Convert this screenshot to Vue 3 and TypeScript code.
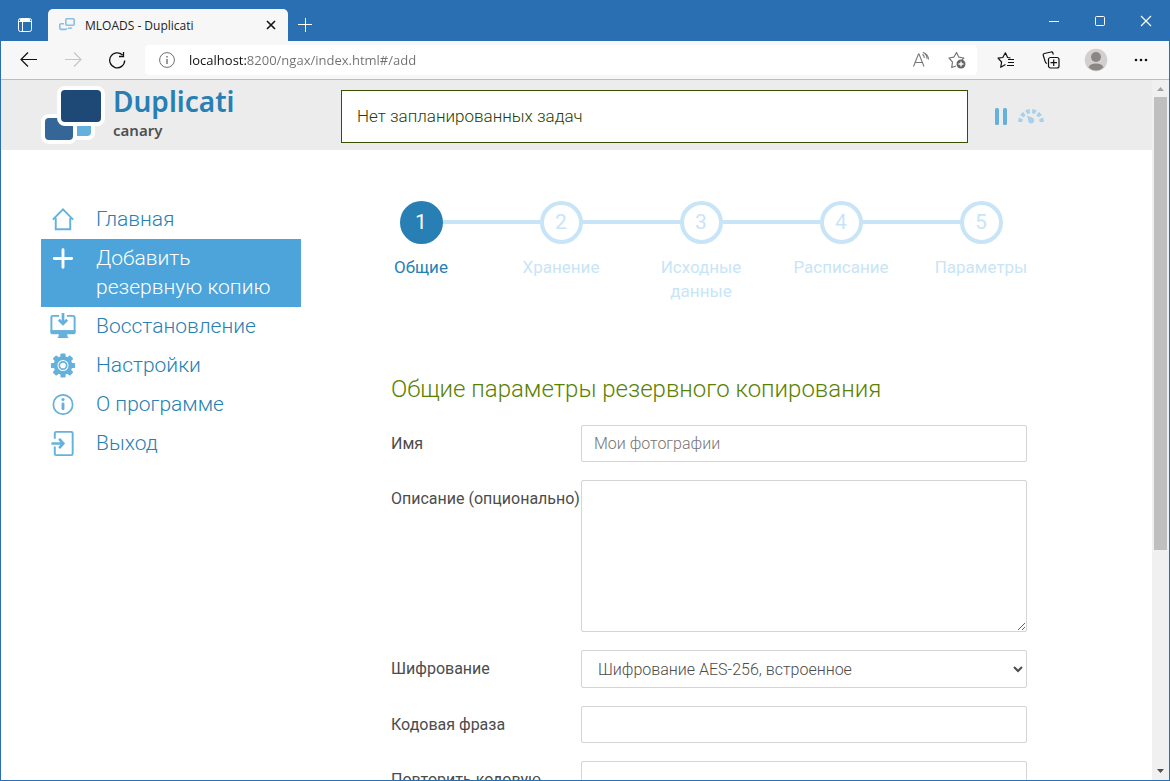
<script setup lang="ts">
import { ref } from 'vue'

interface NavItem {
  id: string
  label: string
  active?: boolean
}

const nav: NavItem[] = [
  { id: 'home', label: 'Главная' },
  { id: 'add', label: 'Добавить резервную копию', active: true },
  { id: 'restore', label: 'Восстановление' },
  { id: 'settings', label: 'Настройки' },
  { id: 'about', label: 'О программе' },
  { id: 'logout', label: 'Выход' },
]

const steps: string[] = ['Общие', 'Хранение', 'Исходные данные', 'Расписание', 'Параметры']
const teeth: number[] = [0, 45, 90, 135, 180, 225, 270, 315]
const gaugeMarks: number[] = [-80, -48, -16, 16, 48, 80]

const current = ref(0)
const address = ref('localhost:8200/ngax/index.html#/add')
const name = ref('')
const description = ref('')
const encryption = ref('aes')
const passphrase = ref('')
const repeat = ref('')
</script>

<template>
  <div class="window">
    <header class="titlebar">
      <button class="tab-menu" aria-label="Меню вкладок">
        <svg width="16" height="16" viewBox="0 0 16 16" fill="none" stroke="#fff">
          <rect x="1.5" y="1.5" width="13" height="13" rx="2" />
          <path d="M2 4.5h12M5.500 4v10" />
          <path d="M3 3h10" stroke-width="2" />
        </svg>
      </button>
      <div class="tab">
        <svg width="16" height="16" viewBox="0 0 16 16" fill="none" stroke="#86c1e2" stroke-width="1.6">
          <rect x="6.8" y="1.8" width="8.4" height="6.4" rx="1" />
          <path d="M5 6.800H2A1.200 1.200 0 0 0 .8 8v3.200A1.200 1.200 0 0 0 2 12.400h4.500A1.200 1.200 0 0 0 7.700 11.200M9 11.200h2.500a1 1 0 0 0 1-1" />
        </svg>
        <span class="tab-title">MLOADS - Duplicati</span>
        <button class="tab-close" aria-label="Закрыть вкладку">
          <svg width="10" height="10" viewBox="0 0 10 10" stroke="#111" stroke-width="1.6"><path d="M1 1l8 8M9 1L1 9" /></svg>
        </button>
      </div>
      <button class="new-tab" aria-label="Новая вкладка">
        <svg width="14" height="14" viewBox="0 0 14 14" stroke="#fff"><path d="M7.5 0v14M0 6.5h14" /></svg>
      </button>
      <div class="caption">
        <button aria-label="Свернуть">
          <svg width="12" height="12" viewBox="0 0 12 12" stroke="#fff"><path d="M1 6.5h10" /></svg>
        </button>
        <button aria-label="Развернуть">
          <svg width="12" height="12" viewBox="0 0 12 12" fill="none" stroke="#fff"><rect x="1.5" y="1.5" width="9" height="9" rx="1" /></svg>
        </button>
        <button aria-label="Закрыть">
          <svg width="12" height="12" viewBox="0 0 12 12" stroke="#fff" stroke-width="1.2"><path d="M1 1l10 10M11 1L1 11" /></svg>
        </button>
      </div>
    </header>

    <div class="toolbar">
      <div class="history">
        <button aria-label="Назад">
          <svg width="18" height="16" viewBox="0 0 18 16" fill="none" stroke="#111" stroke-width="1.200"><path d="M17 7.500H1.500M8 .5l-7 7 7 7" /></svg>
        </button>
        <button aria-label="Вперёд" disabled>
          <svg width="18" height="16" viewBox="0 0 18 16" fill="none" stroke="#c6c6c6" stroke-width="1.200"><path d="M1 7.500h15.500M10 .5l7 7-7 7" /></svg>
        </button>
        <button aria-label="Обновить">
          <svg width="18" height="18" viewBox="0 0 18 18" fill="none" stroke="#111" stroke-width="1.300"><path d="M16.700 9.500A7.500 7.500 0 1 1 14.500 4M15.500 1v4.500H11" /></svg>
        </button>
      </div>
      <div class="address">
        <svg width="16" height="16" viewBox="0 0 16 16" fill="none" stroke="#707070">
          <circle cx="8" cy="8" r="7.400" />
          <path d="M8 7v5M8 4v1.500" stroke-width="1.400" />
        </svg>
        <input v-model="address" class="address-input" type="text" aria-label="Адрес" />
        <button aria-label="Прочесть вслух">
          <svg width="18" height="16" viewBox="0 0 18 16" fill="none" stroke="#777" stroke-width="1.100">
            <path d="M1.500 14.500L6.500 2h.5l5 12.500M3.300 10.500h7M10.500 2.200c1.300 1 1.800 2.200 1.800 3.800M12.300.8c1.800 1.500 2.700 3.200 2.700 6M10.800.5c3.500 1 5.500 3.500 5.700 7" />
          </svg>
        </button>
        <button aria-label="Добавить в избранное">
          <svg width="18" height="18" viewBox="0 0 18 18" fill="none" stroke="#777" stroke-width="1.200" stroke-linejoin="round">
            <path d="M8 15l-4.300 1.500.8-5.300L1 7l4.800-.8L8.500 1.500l2.400 4.700 5 .8-2 1.800" />
            <circle cx="13" cy="13" r="4.500" fill="#666" stroke="none" />
            <path d="M13 10.500v5M10.500 13h5" stroke="#fff" stroke-width="1.300" />
          </svg>
        </button>
      </div>
      <div class="tools">
        <button aria-label="Избранное">
          <svg width="18" height="18" viewBox="0 0 18 18" fill="none" stroke="#111" stroke-width="1.200" stroke-linejoin="round">
            <path d="M8.500 13.500l-4.800 2.800.9-5.300L1 7.200l4.800-.7L8.400 1.800l2.200 4.700 2.800.3M11 8.500h6M11 11.500h6M10 14.500h7" />
          </svg>
        </button>
        <button aria-label="Коллекции">
          <svg width="18" height="18" viewBox="0 0 18 18" fill="none" stroke="#111" stroke-width="1.200">
            <path d="M5 12.500c-1-.3-1.500-.8-1.800-1.800L1.300 4.500c-.3-1 0-1.700 1-2L9 1c1-.2 1.600.1 1.900 1l.4 1.500" />
            <rect x="6.500" y="6.500" width="10.500" height="10.500" rx="2" />
            <path d="M11.700 8.500v6.500M8.500 11.700H15" />
          </svg>
        </button>
        <button class="profile" aria-label="Профиль">
          <svg width="24" height="24" viewBox="0 0 24 24">
            <circle cx="12" cy="12" r="11.300" fill="#d2d0ce" />
            <circle cx="12" cy="9" r="5" fill="#8a8684" />
            <path d="M4.500 19.500C5.500 16.500 8 15.500 12 15.500s6.500 1 7.500 4a11 11 0 0 1-15 0z" fill="#8a8684" />
          </svg>
        </button>
        <button aria-label="Настройки и прочее">
          <svg width="16" height="16" viewBox="0 0 16 16" fill="#111"><circle cx="3" cy="8" r="1.300" /><circle cx="8" cy="8" r="1.300" /><circle cx="13" cy="8" r="1.300" /></svg>
        </button>
      </div>
    </div>

    <div class="viewport">
      <div class="page">
        <header class="page-header">
          <a class="brand" href="#/">
            <svg width="64" height="58" viewBox="0 0 64 58">
              <rect x="24" y="25" width="30" height="29" rx="7" fill="#fff" />
              <rect x="0" y="28" width="36" height="30" rx="8" fill="#fff" />
              <path d="M36 34h14v12a4 4 0 0 1-4 4H36z" fill="#65b1dd" />
              <rect x="4" y="32" width="28" height="22" rx="4" fill="#346698" />
              <rect x="16" y="0" width="48" height="40" rx="8" fill="#fff" />
              <rect x="20" y="4" width="40" height="32" rx="4" fill="#1e4875" />
            </svg>
            <span class="brand-text">
              <span class="brand-name">Duplicati</span>
              <span class="channel">canary</span>
            </span>
          </a>
          <div class="status" role="status">Нет запланированных задач</div>
          <div class="controls">
            <button aria-label="Пауза">
              <svg width="12" height="17" viewBox="0 0 12 17" fill="#65b1dd"><rect width="4" height="17" rx="1.500" /><rect x="8" width="4" height="17" rx="1.500" /></svg>
            </button>
            <button aria-label="Ограничение скорости">
              <svg width="26" height="15" viewBox="0 0 26 15" fill="#a7d1ea">
                <path v-for="mark in gaugeMarks" :key="mark" d="M10.700 .2h4.600l-.9 4.200h-2.800z" :transform="`rotate(${mark} 13 13)`" />
                <path d="M9 6.500l5.500 2.300a3 3 0 1 1-4.300 2.400z" />
              </svg>
            </button>
          </div>
        </header>

        <div class="body">
          <nav class="menu" aria-label="Главное меню">
            <a v-for="item in nav" :key="item.id" :href="'#/' + item.id" class="menu-item" :class="{ active: item.active }">
              <svg class="menu-icon" width="28" height="30" viewBox="0 0 28 30" fill="none" stroke="currentColor" stroke-width="2">
                <path v-if="item.id === 'home'" d="M3.500 15.200L14 4.500l10.500 10.700M6.500 13.500V25h15V13.500" />
                <path v-else-if="item.id === 'add'" d="M14 6v18M5 15h18" stroke-width="3" stroke-linecap="round" />
                <g v-else-if="item.id === 'restore'">
                  <path d="M10 4H3.500A1.500 1.500 0 0 0 2 5.500V20h24V5.500A1.500 1.500 0 0 0 24.500 4H18" />
                  <path d="M1 19h26v2.500a1.500 1.500 0 0 1-1.500 1.500h-7.300l.6 2.500 1.200 1.500H8l1.200-1.500.6-2.500H2.500A1.500 1.500 0 0 1 1 21.500z" fill="currentColor" stroke="none" />
                  <path d="M14 1v10M9.700 8L14 12.300 18.300 8" stroke-width="2.800" />
                </g>
                <g v-else-if="item.id === 'settings'">
                  <circle cx="14" cy="15" r="7.700" stroke-width="4" />
                  <circle cx="14" cy="15" r="3.800" stroke-width="1.800" />
                  <rect v-for="angle in teeth" :key="angle" x="11.300" y="2.500" width="5.400" height="5" rx="1" fill="currentColor" stroke="none" :transform="`rotate(${angle} 14 15)`" />
                </g>
                <g v-else-if="item.id === 'about'">
                  <circle cx="14" cy="15" r="10" stroke-width="1.800" />
                  <path d="M14 14.500v5" stroke-width="3" stroke-linecap="round" />
                  <circle cx="14" cy="9.800" r="1.600" fill="currentColor" stroke="none" />
                </g>
                <g v-else>
                  <path d="M5.500 10V4.500A1.500 1.500 0 0 1 7 3h15.500A1.500 1.500 0 0 1 24 4.500v21a1.500 1.500 0 0 1-1.500 1.500H7a1.500 1.500 0 0 1-1.500-1.500V18" />
                  <path d="M2 15h11M10 10.300l4.300 4.700-4.300 4.700" stroke-width="2.800" />
                </g>
              </svg>
              <span>{{ item.label }}</span>
            </a>
          </nav>

          <main class="content">
            <ol class="steps">
              <li v-for="(step, i) in steps" :key="step" class="step" :class="{ current: i === current }">
                <button class="step-button" @click="current = i">
                  <span class="step-number">{{ i + 1 }}</span>
                  <span class="step-label">{{ step }}</span>
                </button>
              </li>
            </ol>

            <form class="form" @submit.prevent>
              <h2>Общие параметры резервного копирования</h2>
              <div class="row">
                <label for="name">Имя</label>
                <input id="name" v-model="name" type="text" placeholder="Мои фотографии" />
              </div>
              <div class="row">
                <label for="description">Описание (опционально)</label>
                <textarea id="description" v-model="description"></textarea>
              </div>
              <div class="row">
                <label for="encryption">Шифрование</label>
                <select id="encryption" v-model="encryption">
                  <option value="aes">Шифрование AES-256, встроенное</option>
                </select>
              </div>
              <div class="row">
                <label for="passphrase">Кодовая фраза</label>
                <input id="passphrase" v-model="passphrase" type="password" />
              </div>
              <div class="row">
                <label for="repeat">Повторить кодовую фразу</label>
                <input id="repeat" v-model="repeat" type="password" />
              </div>
            </form>
          </main>
        </div>
      </div>

      <div class="scrollbar" aria-hidden="true">
        <svg width="17" height="17" viewBox="0 0 17 17"><path d="M5 11l3.500-4 3.500 4z" fill="#a3a3a3" /></svg>
        <div class="track"><div class="thumb"></div></div>
        <svg width="17" height="17" viewBox="0 0 17 17"><path d="M5 6l3.500 4L12 6z" fill="#505050" /></svg>
      </div>
    </div>
  </div>
</template>

<style>
body {
  margin: 0;
}
</style>

<style scoped>
* {
  box-sizing: border-box;
}

button {
  display: flex;
  align-items: center;
  justify-content: center;
  padding: 0;
  border: 0;
  background: none;
  font: inherit;
  color: inherit;
}

a {
  color: inherit;
  text-decoration: none;
}

svg {
  display: block;
  flex: none;
}

.window {
  display: flex;
  flex-direction: column;
  height: 100vh;
  overflow: hidden;
  border: 1px solid #2a6fb2;
  background: #fff;
  font-family: Roboto, "Noto Sans", sans-serif;
}

.titlebar {
  display: flex;
  flex: none;
  height: 40px;
  background: #2a6fb2;
}

.tab-menu {
  width: 47px;
  padding-top: 8px;
}

.tab {
  display: flex;
  align-items: center;
  width: 240px;
  height: 32px;
  margin-top: 8px;
  padding: 0 10px 0 11px;
  gap: 10px;
  border-radius: 5px 5px 0 0;
  background: #f7f7f7;
}

.tab-title {
  flex: 1;
  font: 12px "Open Sans", sans-serif;
  color: #222;
}

.tab-close {
  width: 14px;
  height: 14px;
}

.new-tab {
  width: 34px;
  padding-top: 8px;
}

.caption {
  display: flex;
  margin-left: auto;
}

.caption button {
  width: 46px;
}

.toolbar {
  display: flex;
  flex: none;
  align-items: center;
  height: 39px;
  border-bottom: 1px solid #bdbdbd;
  background: #f7f7f7;
}

.history {
  display: flex;
  padding-left: 6px;
}

.history button {
  width: 44px;
  height: 32px;
}

.address {
  display: flex;
  flex: 1;
  align-items: center;
  height: 30px;
  margin-left: 6px;
  padding: 0 11px 0 14px;
  gap: 18px;
  border-radius: 4px;
  background: #fff;
}

/* The host name is dark, the rest of the address is grey. */
.address-input {
  flex: 1;
  min-width: 0;
  height: 20px;
  margin-left: -4px;
  padding: 0;
  border: 0;
  outline: 0;
  background: linear-gradient(to right, #111 57px, #707070 57px) text;
  font: 13px/20px "Open Sans", sans-serif;
  color: transparent;
  caret-color: #111;
}

.tools {
  display: flex;
  padding: 0 6px;
}

.tools button {
  width: 45px;
  height: 32px;
}

.viewport {
  display: flex;
  flex: 1;
  min-height: 0;
}

.page {
  flex: 1;
  min-width: 0;
  overflow: hidden;
}

.page-header {
  display: flex;
  height: 70px;
  padding: 6px 108px 0 40px;
  background: #ececec;
}

.brand {
  display: flex;
  width: 300px;
  gap: 8px;
}

.brand-text {
  display: flex;
  flex-direction: column;
  font-family: "Noto Sans", sans-serif;
  font-weight: 600;
}

.brand-name {
  font-size: 28px;
  line-height: 30px;
  color: #277fb4;
}

.channel {
  font-size: 15px;
  line-height: 28px;
  color: #505050;
}

.status {
  flex: 1;
  height: 53px;
  margin-top: 4px;
  padding: 0 15px;
  border: 1px solid #375000;
  background: #fff;
  font-size: 17px;
  font-weight: 300;
  line-height: 51px;
  color: #264000;
}

.controls {
  display: flex;
  align-items: center;
  height: 60px;
  margin-left: 27px;
  gap: 11px;
}

.body {
  display: flex;
  padding: 50px 101px 0 40px;
}

.menu {
  flex: none;
  width: 260px;
  font-size: 21px;
  font-weight: 300;
  line-height: 29px;
  color: #277fb4;
}

.menu-item {
  display: flex;
  align-items: flex-start;
  padding: 5px 20px 5px 8px;
  gap: 19px;
}

.menu-icon {
  height: 29px;
  color: #65b1dd;
}

.menu-item.active {
  background: #4ca4da;
  color: #fff;
}

.active .menu-icon {
  color: #fff;
}

.content {
  flex: 1;
  margin-left: 50px;
}

.steps {
  display: grid;
  grid-template-columns: repeat(5, 1fr);
  height: 172px;
  margin: 0;
  padding: 1px 0 0;
  list-style: none;
  color: #c8e5f7;
}

.step {
  position: relative;
}

.step + .step::before {
  content: "";
  position: absolute;
  top: 19px;
  right: 50%;
  width: 100%;
  height: 4px;
  background: #c8e5f7;
}

.step-button {
  position: relative;
  z-index: 1;
  flex-direction: column;
  width: 100%;
  padding: 0 20px;
}

.step-number {
  width: 43px;
  height: 43px;
  border: 4px solid #c8e5f7;
  border-radius: 50%;
  background: #fff;
  font-size: 21px;
  line-height: 35px;
}

.step-label {
  margin-top: 11px;
  font-size: 17px;
  line-height: 24px;
}

.current .step-number {
  border-color: #277fb4;
  background: #277fb4;
  color: #fff;
}

.current .step-label {
  color: #277fb4;
}

.form {
  display: flex;
  flex-direction: column;
  padding: 0 24px 0 40px;
  gap: 18px;
}

h2 {
  margin: 0;
  font-size: 24px;
  font-weight: 300;
  line-height: 35px;
  color: #5a8100;
}

.row {
  display: flex;
  align-items: flex-start;
}

.row label {
  flex: none;
  width: 190px;
  padding-top: 7px;
  font-size: 16px;
  line-height: 24px;
  color: #4c4c4c;
}

.row input,
.row textarea,
.row select {
  flex: 1;
  min-width: 0;
  height: 37px;
  margin: 0;
  padding: 0 12px;
  border: 1px solid #d5d5d5;
  border-radius: 2px;
  background: #fff;
  font: 300 16px Roboto, "Noto Sans", sans-serif;
  color: #4c4c4c;
}

.row textarea {
  height: 152px;
}

.row select {
  height: 38px;
}

.row input::placeholder {
  color: #757575;
}

.scrollbar {
  display: flex;
  flex-direction: column;
  width: 17px;
  background: #f0f0f0;
}

.track {
  flex: 1;
  padding: 0 2px;
}

.thumb {
  height: 68%;
  background: #bfbfbf;
}
</style>
